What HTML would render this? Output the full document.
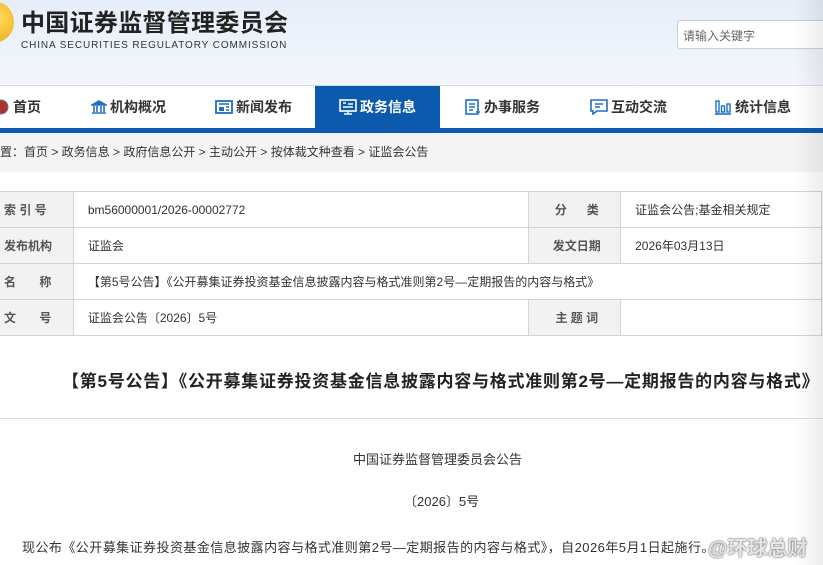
<!DOCTYPE html>
<html><head><meta charset="utf-8"><style>
*{margin:0;padding:0;box-sizing:border-box}
body{width:823px;height:565px;overflow:hidden;background:#fff;font-family:"Liberation Sans","Noto Sans CJK SC",sans-serif;color:#333;position:relative}
.hdr{position:absolute;left:0;top:0;width:823px;height:86px;background:linear-gradient(180deg,#e6eef9,#f3f7fc);border-bottom:1px solid #d8dde4}
.logo{position:absolute;left:-22px;top:2px;width:36px;height:40px;border-radius:50%;background:radial-gradient(circle at 60% 40%,#ffd95a,#e8a80c)}
.t1{position:absolute;left:21px;top:3px;font-size:24px;font-weight:bold;color:#222;letter-spacing:0.3px}
.t2{position:absolute;left:21px;top:40px;font-size:10px;color:#333;letter-spacing:0.9px}
.search{position:absolute;left:677px;top:20px;width:160px;height:29px;border:1px solid #ccd;border-radius:3px;background:#fff;font-size:12px;color:#666;padding:6px 0 0 5px}
.nav{position:absolute;left:0;top:86px;width:823px;height:42px;background:#fff}
.bar{position:absolute;left:0;top:128px;width:823px;height:5px;background:#0c5aad}
.it{position:absolute;top:86px;height:42px;font-size:14px;font-weight:bold;color:#333;line-height:42px;white-space:nowrap}
.it svg{vertical-align:-3px;margin-right:3px}
.act{left:315px;width:125px;background:#0c5aad;color:#fff;text-align:center}
.bc{position:absolute;left:0;top:133px;width:823px;height:39px;background:#f4f4f4;font-size:12px;color:#333;line-height:38px;padding-left:0}
table{position:absolute;left:-1px;top:191px;border-collapse:collapse;font-size:12px}
td{border:1px solid #cfd5dd;height:36px;padding:0 0 0 14px;color:#333}
td.l{background:#f2f2f2;font-weight:bold;color:#555;padding:0 0 0 4px}
.title{position:absolute;left:62px;top:367px;font-size:17px;font-weight:bold;color:#222;white-space:nowrap;letter-spacing:0.75px}
.hr{position:absolute;left:0;top:418px;width:823px;height:1px;background:#ddd}
.p{position:absolute;font-size:13px;color:#333;white-space:nowrap}
.shade{position:absolute;right:0;top:0;width:28px;height:565px;background:linear-gradient(90deg,rgba(0,0,0,0),rgba(0,0,0,0.07))}
.wm{position:absolute;left:708px;top:532px;font-size:20px;color:rgba(255,255,255,0.85);text-shadow:0 0 1px #555,0 0 2px #777;font-weight:bold}
</style></head><body>
<div class="hdr"><div class="logo"></div>
<div class="t1">中国证券监督管理委员会</div>
<div class="t2">CHINA SECURITIES REGULATORY COMMISSION</div>
<div class="search">请输入关键字</div></div>
<div class="nav"></div>
<div class="it" style="left:-4px"><svg width="14" height="16"><circle cx="5" cy="8" r="7" fill="#a33" stroke="#777"/></svg>首页</div>
<div class="it" style="left:91px"><svg width="16" height="16"><path d="M1 6L8 2L15 6ZM3 7v6M6 7v6M10 7v6M13 7v6M1 14h14" stroke="#1f6fc5" stroke-width="1.6" fill="#1f6fc5"/></svg>机构概况</div>
<div class="it" style="left:215px"><svg width="18" height="16"><rect x="1" y="2" width="16" height="12" fill="none" stroke="#1f6fc5" stroke-width="1.8"/><rect x="4" y="8" width="5" height="4" fill="#1f6fc5"/><path d="M4 5h10M11 8h3M11 11h3" stroke="#1f6fc5" stroke-width="1.4"/></svg>新闻发布</div>
<div class="it act"><svg width="18" height="16"><rect x="1" y="1" width="16" height="11" fill="none" stroke="#fff" stroke-width="1.6"/><path d="M4 4h3M9 5h5M4 8h10M5 15h8M9 12v3" stroke="#fff" stroke-width="1.4"/></svg>政务信息</div>
<div class="it" style="left:465px"><svg width="16" height="16"><rect x="1" y="1" width="12" height="14" fill="none" stroke="#1f6fc5" stroke-width="1.6"/><path d="M4 5h6M4 8h6M4 11h4M11 13h4" stroke="#1f6fc5" stroke-width="1.4"/></svg>办事服务</div>
<div class="it" style="left:590px"><svg width="18" height="16"><path d="M1 1h16v11H7l-4 3v-3H1z" fill="none" stroke="#1f6fc5" stroke-width="1.6"/><path d="M5 5h8M5 8h5" stroke="#1f6fc5" stroke-width="1.4"/></svg>互动交流</div>
<div class="it" style="left:714px"><svg width="18" height="16"><path d="M1 15h16" stroke="#1f6fc5" stroke-width="1.6"/><rect x="2" y="2" width="3" height="11" fill="none" stroke="#1f6fc5" stroke-width="1.4"/><rect x="7.5" y="7" width="3" height="6" fill="none" stroke="#1f6fc5" stroke-width="1.4"/><rect x="13" y="5" width="3" height="8" fill="none" stroke="#1f6fc5" stroke-width="1.4"/></svg>统计信息</div>
<div class="bar"></div>
<div class="bc">置：首页 &gt; 政务信息 &gt; 政府信息公开 &gt; 主动公开 &gt; 按体裁文种查看 &gt; 证监会公告</div>
<table>
<tr><td class="l" style="width:74px">索&nbsp;引&nbsp;号</td><td style="width:458px">bm56000001/2026-00002772</td><td class="l" style="width:92px;text-align:center">分&nbsp;&nbsp;&nbsp;&nbsp;&nbsp;&nbsp;类</td><td style="width:202px">证监会公告;基金相关规定</td></tr>
<tr><td class="l">发布机构</td><td>证监会</td><td class="l" style="text-align:center">发文日期</td><td>2026年03月13日</td></tr>
<tr><td class="l">名&nbsp;&nbsp;&nbsp;&nbsp;&nbsp;&nbsp;&nbsp;称</td><td colspan="3">【第5号公告】《公开募集证券投资基金信息披露内容与格式准则第2号—定期报告的内容与格式》</td></tr>
<tr><td class="l">文&nbsp;&nbsp;&nbsp;&nbsp;&nbsp;&nbsp;&nbsp;号</td><td>证监会公告〔2026〕5号</td><td class="l" style="text-align:center">主&nbsp;题&nbsp;词</td><td></td></tr>
</table>
<div class="title">【第5号公告】《公开募集证券投资基金信息披露内容与格式准则第2号—定期报告的内容与格式》</div>
<div class="hr"></div>
<div class="p" style="left:353px;top:449px">中国证券监督管理委员会公告</div>
<div class="p" style="left:404px;top:491px">〔2026〕5号</div>
<div class="p" style="left:22px;top:537px;letter-spacing:0.45px">现公布《公开募集证券投资基金信息披露内容与格式准则第2号—定期报告的内容与格式》，自2026年5月1日起施行。</div>
<div class="wm">@环球总财</div>
<div class="shade"></div>
</body></html>
